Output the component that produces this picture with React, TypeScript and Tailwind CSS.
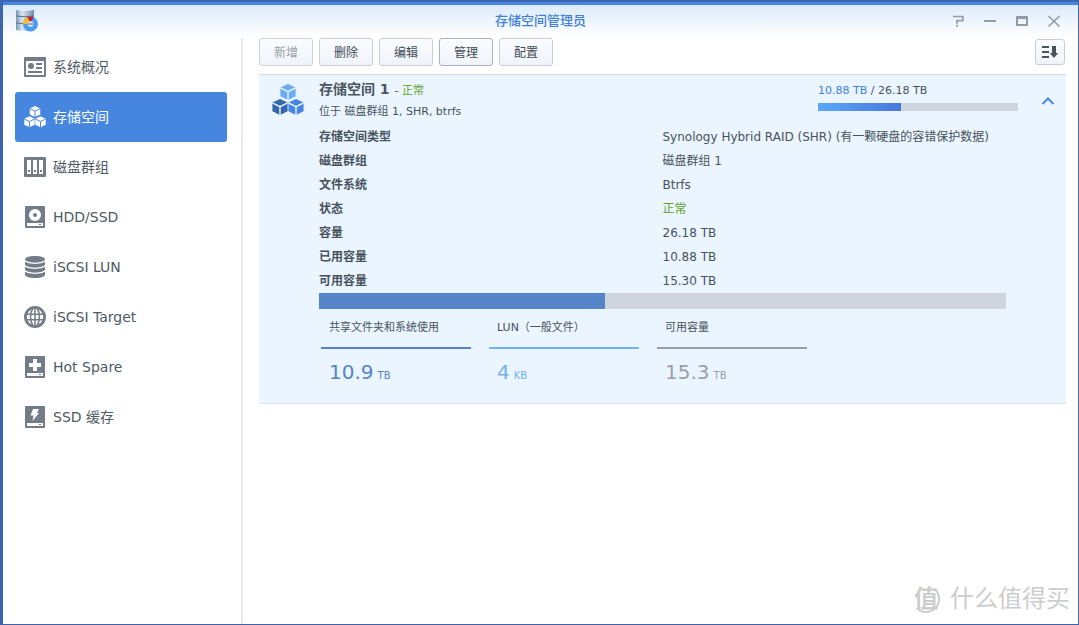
import React, { useState } from "react";

type IconProps = { className?: string };

const INK = "#737c87";

function Cube({ x, y, fill, line }: { x: number; y: number; fill: string; line: string }) {
  return (
    <g transform={`translate(${x} ${y})`}>
      <path d="M8 0 15.6 3.6V12.2L8 16 .4 12.2V3.6Z" fill={fill} />
      <path d="M.4 3.9 8 7.6l7.6-3.7M8 7.6V16" fill="none" stroke={line} strokeWidth="1.4" />
    </g>
  );
}

function CubesIcon({ colors, line, className }: { colors: string[]; line: string; className?: string }) {
  return (
    <svg viewBox="0 0 32 32" className={className} aria-hidden="true">
      <Cube x={8} y={0} fill={colors[0]} line={line} />
      <Cube x={0} y={15} fill={colors[1]} line={line} />
      <Cube x={16} y={15} fill={colors[2]} line={line} />
    </svg>
  );
}

function OverviewIcon({ className }: IconProps) {
  return (
    <svg viewBox="0 0 22 22" className={className} aria-hidden="true">
      <path fillRule="evenodd" fill={INK} d="M1 1h20a1 1 0 0 1 1 1v18a1 1 0 0 1-1 1H1a1 1 0 0 1-1-1V2a1 1 0 0 1 1-1ZM2 5v14h18V5Z" />
      <circle cx="7" cy="10" r="3" fill={INK} />
      <path fill={INK} d="M12 7h6v2h-6zM12 11h6v2h-6zM4 15h14v2H4z" />
    </svg>
  );
}

function GroupIcon({ className }: IconProps) {
  return (
    <svg viewBox="0 0 22 22" className={className} aria-hidden="true">
      <rect y="1" width="22" height="20" rx="1" fill={INK} />
      <path fill="#fff" d="M3 4h4v14H3zM9 4h4v14H9zM15 4h4v14h-4z" />
      <path fill={INK} d="M4 14h2v2H4zM10 14h2v2h-2zM16 14h2v2h-2z" />
    </svg>
  );
}

function DriveBase({ children, className }: { children: React.ReactNode; className?: string }) {
  return (
    <svg viewBox="0 0 22 22" className={className} aria-hidden="true">
      <rect x="1" width="20" height="22" rx="1" fill={INK} />
      <path fill="#fff" d="M3 17h16v3H3z" />
      <path fill={INK} d="M15 18h2v1h-2z" />
      {children}
    </svg>
  );
}

function DiskIcon({ className }: IconProps) {
  return (
    <DriveBase className={className}>
      <circle cx="11" cy="9" r="6" fill="#fff" />
      <circle cx="11" cy="9" r="2" fill={INK} />
    </DriveBase>
  );
}

function SpareIcon({ className }: IconProps) {
  return (
    <DriveBase className={className}>
      <path fill="#fff" d="M9 3h4v4h4v4h-4v4H9v-4H5V7h4z" />
    </DriveBase>
  );
}

function CacheIcon({ className }: IconProps) {
  return (
    <DriveBase className={className}>
      <path fill="#fff" d="M9 3h6l-2 4h2L8.500 15l1-5.500H6.500z" />
    </DriveBase>
  );
}

function LunIcon({ className }: IconProps) {
  return (
    <svg viewBox="0 0 22 22" className={className} aria-hidden="true">
      <path fill={INK} d="M1 3.500C1 1.200 5 0 11 0s10 1.200 10 3.500v15C21 20.800 17 22 11 22S1 20.800 1 18.500Z" />
      <path fill="none" stroke="#fff" strokeWidth="1.300" d="M.5 4.200C2 6.600 6 7.300 11 7.300s9-.7 10.500-3.100M.5 9.200c1.500 2.400 5.500 3.100 10.500 3.100s9-.7 10.500-3.100M.5 14.200c1.500 2.400 5.500 3.100 10.500 3.100s9-.7 10.500-3.100" />
    </svg>
  );
}

function TargetIcon({ className }: IconProps) {
  return (
    <svg viewBox="0 0 22 22" className={className} aria-hidden="true">
      <circle cx="11" cy="11" r="11" fill={INK} />
      <circle cx="11" cy="11" r="8.200" fill="#fff" />
      <path fill="none" stroke={INK} strokeWidth="1.500" d="M11 2v18M2 8.200h18M2 13.800h18M8.800 2.500C5.800 7 5.800 15 8.800 19.500M13.200 2.500c3 4.500 3 12.500 0 17" />
    </svg>
  );
}

function VolumeIcon({ className }: IconProps) {
  return <CubesIcon className={className} colors={["#fff", "#fff", "#fff"]} line="#4786df" />;
}

function AppIcon() {
  return (
    <svg viewBox="0 0 24 24" className="size-6" aria-hidden="true">
      <defs>
        <linearGradient id="metal" x1="0" x2="1" y1="0" y2="0">
          <stop offset="0" stopColor="#7896b4" />
          <stop offset=".35" stopColor="#dbe8f3" />
          <stop offset="1" stopColor="#6e8baa" />
        </linearGradient>
      </defs>
      <path fill="url(#metal)" d="M1 1q9 2 18 0v20q-9 2-18 0z" />
      <path fill="none" stroke="#55708c" d="M1 7q9 1.500 18 0M1 14q9 1.500 18 0" />
      <circle cx="15.500" cy="15" r="5.200" fill="#d3e1ec" stroke="#4b9af0" strokeWidth="4.600" />
      <path d="M10.300 15a5.200 5.200 0 0 1 3.200-4.800" fill="none" stroke="#f3bd2a" strokeWidth="4.600" />
      <path d="M13.500 10.200a5.200 5.200 0 0 1 4 0" fill="none" stroke="#cc1f2c" strokeWidth="4.600" />
      <path d="M13 15h5" stroke="#5a7188" />
    </svg>
  );
}

const NAV = [
  { label: "系统概况", Icon: OverviewIcon },
  { label: "存储空间", Icon: VolumeIcon },
  { label: "磁盘群组", Icon: GroupIcon },
  { label: "HDD/SSD", Icon: DiskIcon },
  { label: "iSCSI LUN", Icon: LunIcon },
  { label: "iSCSI Target", Icon: TargetIcon },
  { label: "Hot Spare", Icon: SpareIcon },
  { label: "SSD 缓存", Icon: CacheIcon },
];

const ACTIONS = [
  { label: "新增", style: "border-[#cdd3dd] text-[#9a9fa8]", disabled: true },
  { label: "删除", style: "border-[#c6ced9] text-[#414b55]", disabled: false },
  { label: "编辑", style: "border-[#c6ced9] text-[#414b55]", disabled: false },
  { label: "管理", style: "border-[#a9b4c2] text-[#414b55]", disabled: false },
  { label: "配置", style: "border-[#c6ced9] text-[#414b55]", disabled: false },
];

const DETAILS = [
  { label: "存储空间类型", value: "Synology Hybrid RAID (SHR) (有一颗硬盘的容错保护数据)" },
  { label: "磁盘群组", value: "磁盘群组 1" },
  { label: "文件系统", value: "Btrfs" },
  { label: "状态", value: "正常", good: true },
  { label: "容量", value: "26.18 TB" },
  { label: "已用容量", value: "10.88 TB" },
  { label: "可用容量", value: "15.30 TB" },
];

const USAGE = [
  { label: "共享文件夹和系统使用", value: "10.9", unit: "TB", line: "border-[#5684c8]", text: "text-[#5684c8]" },
  { label: "LUN（一般文件）", value: "4", unit: "KB", line: "border-[#73b1f3]", text: "text-[#73b1f3]" },
  { label: "可用容量", value: "15.3", unit: "TB", line: "border-[#989fab]", text: "text-[#989fab]" },
];

function TitleBar() {
  return (
    <header className="grid h-8 grid-cols-3 items-center bg-linear-to-b from-[#dcebfb] to-white px-3">
      <AppIcon />
      <h1 className="text-center text-[13px] font-medium text-[#4080d8]">存储空间管理员</h1>
      <div className="flex justify-end gap-4 pr-1 text-[#949ba6]">
        <button aria-label="帮助" className="size-4">
          <svg viewBox="0 0 16 16" fill="none" stroke="currentColor" strokeWidth="1.700">
            <path d="M3 3.500h9.800v4.200H7v3M7 11.800v2" />
          </svg>
        </button>
        <button aria-label="最小化" className="size-4">
          <svg viewBox="0 0 16 16"><path fill="currentColor" d="M2 7h12v2H2z" /></svg>
        </button>
        <button aria-label="最大化" className="size-4">
          <svg viewBox="0 0 16 16"><path fill="currentColor" fillRule="evenodd" d="M2 3h12v10H2zM4 6v5h8V6Z" /></svg>
        </button>
        <button aria-label="关闭" className="size-4">
          <svg viewBox="0 0 16 16" fill="none" stroke="currentColor" strokeWidth="1.600"><path d="m2.500 3 11 10.500m0-10.500-11 10.500" /></svg>
        </button>
      </div>
    </header>
  );
}

function Sidebar({ active, onSelect }: { active: string; onSelect: (label: string) => void }) {
  return (
    <nav className="w-60 shrink-0 border-r-2 border-[#e8eaec] py-1 pr-3.5 pl-3">
      <ul>
        {NAV.map(({ label, Icon }) => (
          <li key={label}>
            <button
              onClick={() => onSelect(label)}
              className={
                label === active
                  ? "flex h-[50px] w-full items-center gap-[7px] rounded-[3px] bg-[#4786df] pl-[9px] text-left text-sm text-white"
                  : "flex h-[50px] w-full items-center gap-[7px] rounded-[3px] pl-[9px] text-left text-sm text-[#505a64]"
              }
            >
              <Icon className="size-[22px]" />
              {label}
            </button>
          </li>
        ))}
      </ul>
    </nav>
  );
}

function Toolbar() {
  return (
    <div className="flex items-center justify-between">
      <div className="flex gap-1.5">
        {ACTIONS.map(({ label, style, disabled }) => (
          <button
            key={label}
            disabled={disabled}
            className={`h-7 w-[54px] rounded-[3px] border bg-linear-to-b from-[#fafcff] to-[#f0f4f9] pt-0.5 text-xs ${style}`}
          >
            {label}
          </button>
        ))}
      </div>
      <button
        aria-label="排序"
        className="mr-px flex h-[26px] w-[30px] items-center justify-center rounded-[3px] border border-[#c6ced9] bg-linear-to-b from-[#fafcff] to-[#f0f4f9] text-[#4b525c]"
      >
        <svg viewBox="0 0 16 14" className="h-3.5 w-4">
          <path fill="currentColor" d="M0 1h7v2H0zM0 6h7v2H0zM0 11h7v2H0zM10 1h4v7h2.200L12 13 7.800 8H10z" />
        </svg>
      </button>
    </div>
  );
}

function VolumePanel() {
  const [open, setOpen] = useState(true);
  return (
    <section className="mt-2 border-t border-b border-t-[#cfdbe7] border-b-[#dfe8f0] bg-[#eaf5ff] pb-1 pl-[13px]">
      <div className="flex h-[50px] items-start pt-1">
        <CubesIcon className="mt-[5px] mr-[15px] size-8" colors={["#68acfb", "#3667ab", "#4786df"]} line="#eaf5ff" />
        <div className="grow">
          <h2 className="text-sm leading-5 font-bold text-[#4b5560]">
            存储空间 1 <span className="text-[11px] font-normal">- <span className="text-[#62a02c]">正常</span></span>
          </h2>
          <p className="mt-[3px] text-[11px] leading-4">位于 磁盘群组 1, SHR, btrfs</p>
        </div>
        <div className="w-[200px]">
          <p className="mt-1 text-[11px] leading-4">
            <span className="text-[#4080e0]">10.88 TB</span> / 26.18 TB
          </p>
          <div className="mt-1 h-2 bg-[#cfd5df]">
            <div className="h-full bg-linear-to-r from-[#5aa6fb] to-[#4878de]" style={{ width: `${(10.88 / 26.18) * 100}%` }} />
          </div>
        </div>
        <button aria-label="收起" aria-expanded={open} onClick={() => setOpen(!open)} className="mt-[15px] mr-2.5 ml-[22px]">
          <svg viewBox="0 0 16 14" className="h-3.5 w-4" fill="none" stroke="#4786df" strokeWidth="2">
            <path d="M2.500 10 8 4.500l5.500 5.500" />
          </svg>
        </button>
      </div>
      {open && (
        <div className="mr-[60px] ml-[47px]">
          <dl className="text-xs leading-6">
            {DETAILS.map(({ label, value, good }) => (
              <div key={label} className="grid grid-cols-2">
                <dt className="font-bold">{label}</dt>
                <dd className={good ? "text-[#62a02c]" : ""}>{value}</dd>
              </div>
            ))}
          </dl>
          <div className="h-4 bg-[#cfd5df]">
            <div className="h-full bg-[#5684c8]" style={{ width: `${(10.88 / 26.18) * 100}%` }} />
          </div>
          <ul className="ml-0.5 flex gap-[18px]">
            {USAGE.map(({ label, value, unit, line, text }) => (
              <li key={label} className="w-[150px]">
                <p className={`h-10 border-b-2 pl-2 text-[11px] leading-[38px] ${line}`}>{label}</p>
                <p className={`flex items-baseline gap-1 pl-2 text-xl leading-[46px] ${text}`}>
                  {value}
                  <span className="text-[10px]">{unit}</span>
                </p>
              </li>
            ))}
          </ul>
        </div>
      )}
    </section>
  );
}

function Watermark() {
  return (
    <div className="pointer-events-none absolute right-2 bottom-[7px] flex items-center gap-2.5 text-2xl leading-9 text-[#cdcdcd]">
      <span className="flex size-7 items-center justify-center rounded-full border-2 border-t-transparent border-l-transparent border-[#cdcdcd] font-bold">
        值
      </span>
      <span>什么值得买</span>
    </div>
  );
}

export default function App() {
  const [active, setActive] = useState("存储空间");
  return (
    <div className="relative flex min-h-screen flex-col border-t-2 border-r border-b border-l-3 border-[#3b65b0] bg-white font-['DejaVu_Sans','Noto_Sans_CJK_SC',sans-serif] text-[#48525c]">
      <div className="h-[3px] bg-[#4786df]" />
      <TitleBar />
      <div className="flex grow pt-px">
        <Sidebar active={active} onSelect={setActive} />
        <main className="min-w-0 grow pr-3 pl-4">
          <Toolbar />
          <VolumePanel />
        </main>
      </div>
      <Watermark />
    </div>
  );
}
